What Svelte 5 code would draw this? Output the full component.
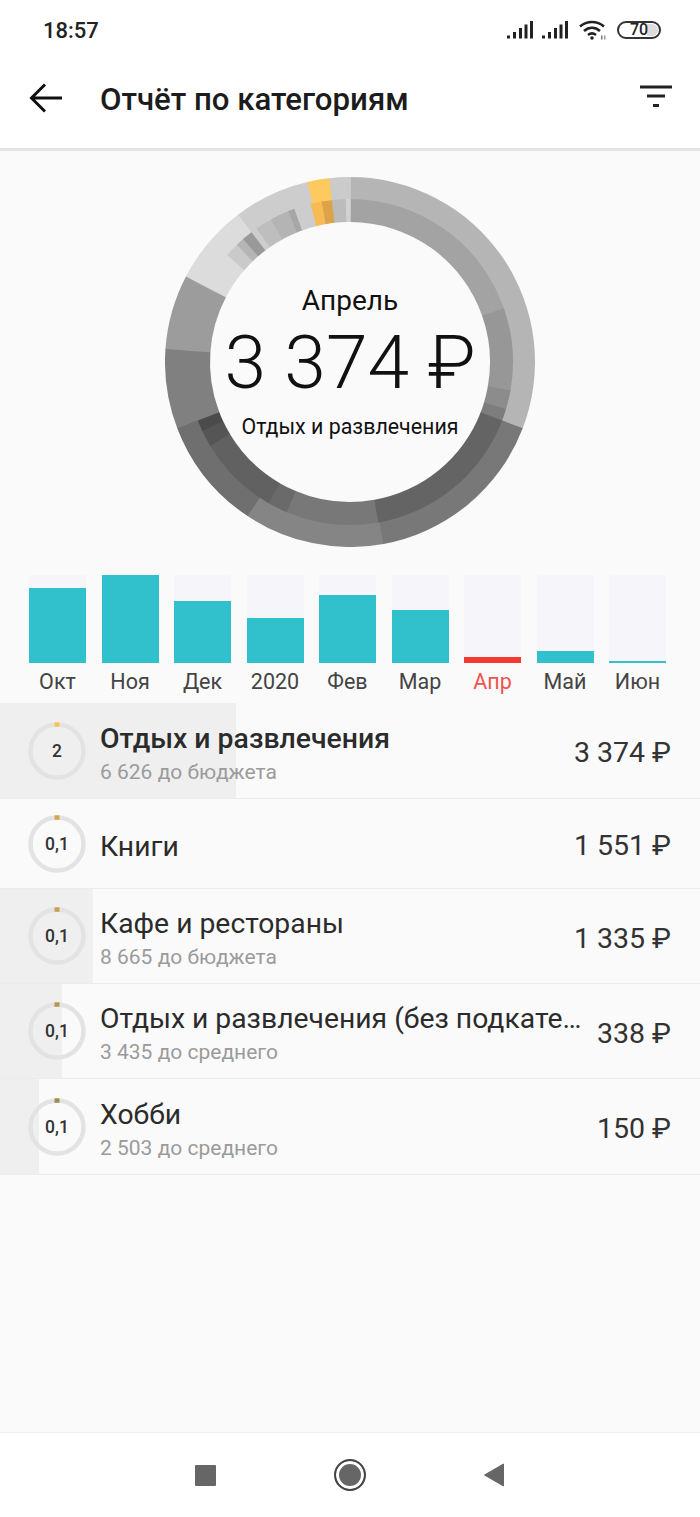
<script>
  const CX = 185;
  const CY = 185;

  // дуга кольца: углы в градусах по часовой от верха
  function arc(r0, r1, a0, a1) {
    const p = (r, a) => {
      const t = ((a - 90) * Math.PI) / 180;
      return `${(CX + r * Math.cos(t)).toFixed(2)} ${(CY + r * Math.sin(t)).toFixed(2)}`;
    };
    const large = a1 - a0 > 180 ? 1 : 0;
    return `M${p(r1, a0)} A${r1} ${r1} 0 ${large} 1 ${p(r1, a1)} L${p(r0, a1)} A${r0} ${r0} 0 ${large} 0 ${p(r0, a0)} Z`;
  }

  const outer = [
    [0, 111, '#b5b5b5'],
    [111, 169.6, '#787878'],
    [169.6, 213.6, '#858585'],
    [213.6, 249, '#6f6f6f'],
    [249, 274, '#808080'],
    [274, 297.5, '#9c9c9c'],
    [297.5, 322.8, '#dcdcdc'],
    [322.8, 346.7, '#cdcdcd'],
    [346.7, 353.6, '#fec95f'],
    [353.6, 360, '#cbcbcb']
  ];

  const inner = [
    [0, 70.7, '#a3a3a3'],
    [70.7, 100, '#979797'],
    [100, 106.8, '#8c8c8c'],
    [106.8, 111, '#7d7d7d'],
    [111, 170, '#646464'],
    [170, 202.8, '#787878'],
    [202.8, 210, '#6a6a6a'],
    [210, 239, '#616161'],
    [239, 245, '#555555'],
    [245, 249, '#4b4b4b'],
    [249, 274, '#808080'],
    [274, 297.5, '#9c9c9c'],
    [297.5, 311, '#dcdcdc'],
    [311, 316, '#cacaca'],
    [316, 319, '#b5b5b5'],
    [319, 322.8, '#999999'],
    [322.8, 325, '#cdcdcd'],
    [325, 331, '#bebebe'],
    [331, 337.7, '#b4b4b4'],
    [337.7, 340, '#a6a6a6'],
    [340, 346, '#cdcdcd'],
    [346, 350, '#f6bb55'],
    [350, 353.6, '#dca349'],
    [353.6, 358.5, '#bcbcbc'],
    [358.5, 360, '#d2d2d2']
  ];

  const months = [
    { name: 'Окт', h: 75 },
    { name: 'Ноя', h: 88 },
    { name: 'Дек', h: 62 },
    { name: '2020', h: 45 },
    { name: 'Фев', h: 68 },
    { name: 'Мар', h: 53 },
    { name: 'Апр', h: 6, current: true },
    { name: 'Май', h: 12 },
    { name: 'Июн', h: 2 }
  ];

  const rows = [
    { title: 'Отдых и развлечения', sub: '6 626 до бюджета', value: '2', sum: '3 374 ₽', fill: 236, height: 96, bold: true, dot: '#fcc158' },
    { title: 'Книги', sub: '', value: '0,1', sum: '1 551 ₽', fill: 0, height: 90, dot: '#d8a550' },
    { title: 'Кафе и рестораны', sub: '8 665 до бюджета', value: '0,1', sum: '1 335 ₽', fill: 93, height: 95, dot: '#c9a053' },
    { title: 'Отдых и развлечения (без подкате…', sub: '3 435 до среднего', value: '0,1', sum: '338 ₽', fill: 62, height: 95, dot: '#b8964f' },
    { title: 'Хобби', sub: '2 503 до среднего', value: '0,1', sum: '150 ₽', fill: 39, height: 96, dot: '#a58b4d' }
  ];
</script>

<div class="screen">
  <header class="top">
    <div class="status">
      <span class="time">18:57</span>
      <div class="status-icons">
        {#each [0, 1] as s (s)}
          <svg width="26" height="18" viewBox="0 0 26 18">
            <rect x="0" y="14.5" width="3" height="3" fill="#222" />
            <rect x="6" y="11" width="3" height="6.5" fill="#222" />
            <rect x="12" y="7" width="3" height="10.5" fill="#222" />
            <rect x="17.5" y="3.5" width="3" height="14" fill="#222" />
            <rect x="23" y="0" width="3" height="17.5" fill="#222" />
          </svg>
        {/each}
        <svg class="wifi" width="28" height="20" viewBox="0 0 28 20" fill="none" stroke="#222" stroke-width="2.6">
          <path d="M1 6.5C8 .5 18 .5 25 6.5" />
          <path d="M5 11C10 6.8 16 6.8 21 11" />
          <path d="M9 15C11.500 13 14.500 13 17 15" />
          <circle cx="13" cy="18" r="1.800" fill="#222" stroke="none" />
          <rect x="22" y="15.500" width="1.500" height="4" fill="#777" stroke="none" />
          <rect x="25" y="15.500" width="1.500" height="4" fill="#999" stroke="none" />
        </svg>
        <div class="battery">
          <span class="battery-level"></span>
          <span class="battery-text">70</span>
        </div>
      </div>
    </div>
    <div class="toolbar">
      <svg width="34" height="30" viewBox="0 0 34 30" fill="none" stroke="#111" stroke-width="3">
        <path d="M33 15H3M16 1.500 2.500 15 16 28.500" />
      </svg>
      <h1>Отчёт по категориям</h1>
      <svg class="filter" width="32" height="22" viewBox="0 0 32 22" fill="none" stroke="#222" stroke-width="3">
        <path d="M0 2H32M7 11H25M13 20.500H19" />
      </svg>
    </div>
  </header>

  <section class="donut">
    <svg width="370" height="370" viewBox="0 0 370 370">
      {#each outer as [a0, a1, color]}
        <path d={arc(162, 185, a0, a1 + 0.3)} fill={color} />
      {/each}
      {#each inner as [a0, a1, color]}
        <path d={arc(140, 163, a0, a1 + 0.3)} fill={color} />
      {/each}
    </svg>
    <div class="donut-text">
      <span class="donut-month">Апрель</span>
      <span class="donut-sum">3 374 ₽</span>
      <span class="donut-cat">Отдых и развлечения</span>
    </div>
  </section>

  <section class="bars">
    {#each months as m (m.name)}
      <div class="bar-col">
        <div class="bar-track">
          <div class="bar" class:current={m.current} style="height: {m.h}px"></div>
        </div>
        <span class="bar-label" class:current={m.current}>{m.name}</span>
      </div>
    {/each}
  </section>

  <section class="list">
    {#each rows as row (row.title)}
      <div class="row" style="height: {row.height}px">
        <div class="row-fill" style="width: {row.fill}px"></div>
        <div class="ring">
          <svg width="58" height="58" viewBox="0 0 58 58">
            <circle cx="29" cy="29" r="26.500" fill="none" stroke="#e3e3e3" stroke-width="4.500" />
            <rect x="26.500" y="0.300" width="5" height="4.500" fill={row.dot} />
          </svg>
          <span>{row.value}</span>
        </div>
        <div class="row-text">
          <span class="row-title" class:bold={row.bold}>{row.title}</span>
          {#if row.sub}
            <span class="row-sub">{row.sub}</span>
          {/if}
        </div>
        <span class="row-sum">{row.sum}</span>
      </div>
    {/each}
  </section>

  <nav class="navbar">
    <span class="nav-square"></span>
    <span class="nav-circle"></span>
    <svg width="21" height="24" viewBox="0 0 21 24">
      <path d="M19.500 1V23L.5 12Z" fill="#666" stroke="#666" stroke-linejoin="round" />
    </svg>
  </nav>
</div>

<style>
  :global(body) {
    margin: 0;
    background: #fafafa;
  }

  .screen {
    display: flex;
    flex-direction: column;
    width: 700px;
    height: 1517px;
    overflow: hidden;
    background: #fafafa;
    color: #222;
    font-family: Roboto, 'Noto Sans', sans-serif;
  }

  .top {
    flex: none;
    height: 148px;
    background: #fff;
    border-bottom: 3px solid #e4e4e4;
  }

  .status {
    display: flex;
    align-items: center;
    justify-content: space-between;
    height: 60px;
    padding: 0 39px 0 43px;
  }

  .time {
    font-size: 22px;
    font-weight: 500;
    color: #222;
  }

  .status-icons {
    display: flex;
    align-items: center;
    gap: 9px;
  }

  .wifi {
    margin: 0 0 0 2px;
  }

  .battery {
    position: relative;
    display: flex;
    align-items: center;
    justify-content: center;
    box-sizing: border-box;
    width: 44px;
    height: 18px;
    margin-left: 1px;
    border: 2px solid #333;
    border-radius: 9px;
  }

  .battery-level {
    position: absolute;
    top: 1px;
    right: 1px;
    width: 11px;
    height: 12px;
    border-radius: 0 6px 6px 0;
    background: #ddd;
  }

  .battery-text {
    position: relative;
    font-size: 16px;
    font-weight: 500;
    line-height: 1;
  }

  .toolbar {
    display: flex;
    align-items: center;
    height: 76px;
    padding: 0 28px 0 29px;
  }

  .toolbar h1 {
    flex: 1;
    margin: 2px 0 0 37px;
    font-size: 31.200px;
    font-weight: 500;
    color: #1c1c1c;
  }

  .filter {
    margin-top: -5px;
  }

  .donut {
    flex: none;
    display: grid;
    justify-items: center;
    align-items: center;
    height: 370px;
    margin-top: 26px;
  }

  .donut > * {
    grid-area: 1 / 1;
  }

  .donut-text {
    display: flex;
    flex-direction: column;
    align-items: center;
    padding-top: 10px;
    color: #111;
  }

  .donut-month {
    margin-top: -10px;
    font-size: 28px;
    line-height: 30px;
  }

  .donut-sum {
    margin-top: 5px;
    font-size: 75px;
    font-weight: 300;
    line-height: 82px;
    white-space: nowrap;
  }

  .donut-cat {
    margin-top: 12px;
    font-size: 21.400px;
    line-height: 24px;
  }

  .bars {
    flex: none;
    display: flex;
    gap: 15.500px;
    margin-top: 28px;
    padding: 0 29px;
  }

  .bar-col {
    display: flex;
    flex-direction: column;
    align-items: center;
    width: 57px;
  }

  .bar-track {
    display: flex;
    align-items: flex-end;
    width: 100%;
    height: 88px;
    background: #f6f5fa;
  }

  .bar {
    width: 100%;
    background: #31c1cc;
  }

  .bar.current {
    background: #f53b30;
  }

  .bar-label {
    margin-top: 6px;
    font-size: 21.500px;
    line-height: 25px;
    color: #444;
    white-space: nowrap;
  }

  .bar-label.current {
    color: #ef5350;
  }

  .list {
    flex: none;
    display: flex;
    flex-direction: column;
    margin-top: 9px;
  }

  .row {
    position: relative;
    display: flex;
    align-items: center;
    box-sizing: border-box;
    padding: 0 29px 0 28px;
    border-bottom: 1px solid #ececec;
  }

  .row-fill {
    position: absolute;
    top: 0;
    bottom: 0;
    left: 0;
    background: #efefef;
  }

  .ring {
    position: relative;
    flex: none;
    display: grid;
    place-items: center;
    width: 58px;
    height: 58px;
  }

  .ring > * {
    grid-area: 1 / 1;
  }

  .ring span {
    font-size: 17.500px;
    font-weight: 500;
    color: #333;
  }

  .row-text {
    position: relative;
    flex: 1;
    display: flex;
    flex-direction: column;
    min-width: 0;
    margin-left: 14px;
    padding: 6px 0 0 0;
  }

  .row-title {
    font-size: 28.300px;
    line-height: 36px;
    color: #2b2b2b;
    white-space: nowrap;
  }

  .row-title.bold {
    font-size: 28.400px;
    font-weight: 500;
  }

  .row-sub {
    font-size: 21px;
    line-height: 30px;
    color: #9b9b9b;
    white-space: nowrap;
  }

  .row-sum {
    position: relative;
    flex: none;
    padding-top: 4px;
    font-size: 28.500px;
    color: #333;
    white-space: nowrap;
  }

  .navbar {
    flex: none;
    display: flex;
    align-items: center;
    justify-content: center;
    gap: 118px;
    height: 84px;
    margin-top: auto;
    background: #fff;
    border-top: 1px solid #eee;
  }

  .nav-square {
    width: 21px;
    height: 21px;
    border-radius: 1px;
    background: #666;
  }

  .nav-circle {
    box-sizing: border-box;
    width: 32px;
    height: 32px;
    border: 2px solid #444;
    border-radius: 50%;
    background: #666;
    box-shadow: inset 0 0 0 3px #fff;
  }
</style>
